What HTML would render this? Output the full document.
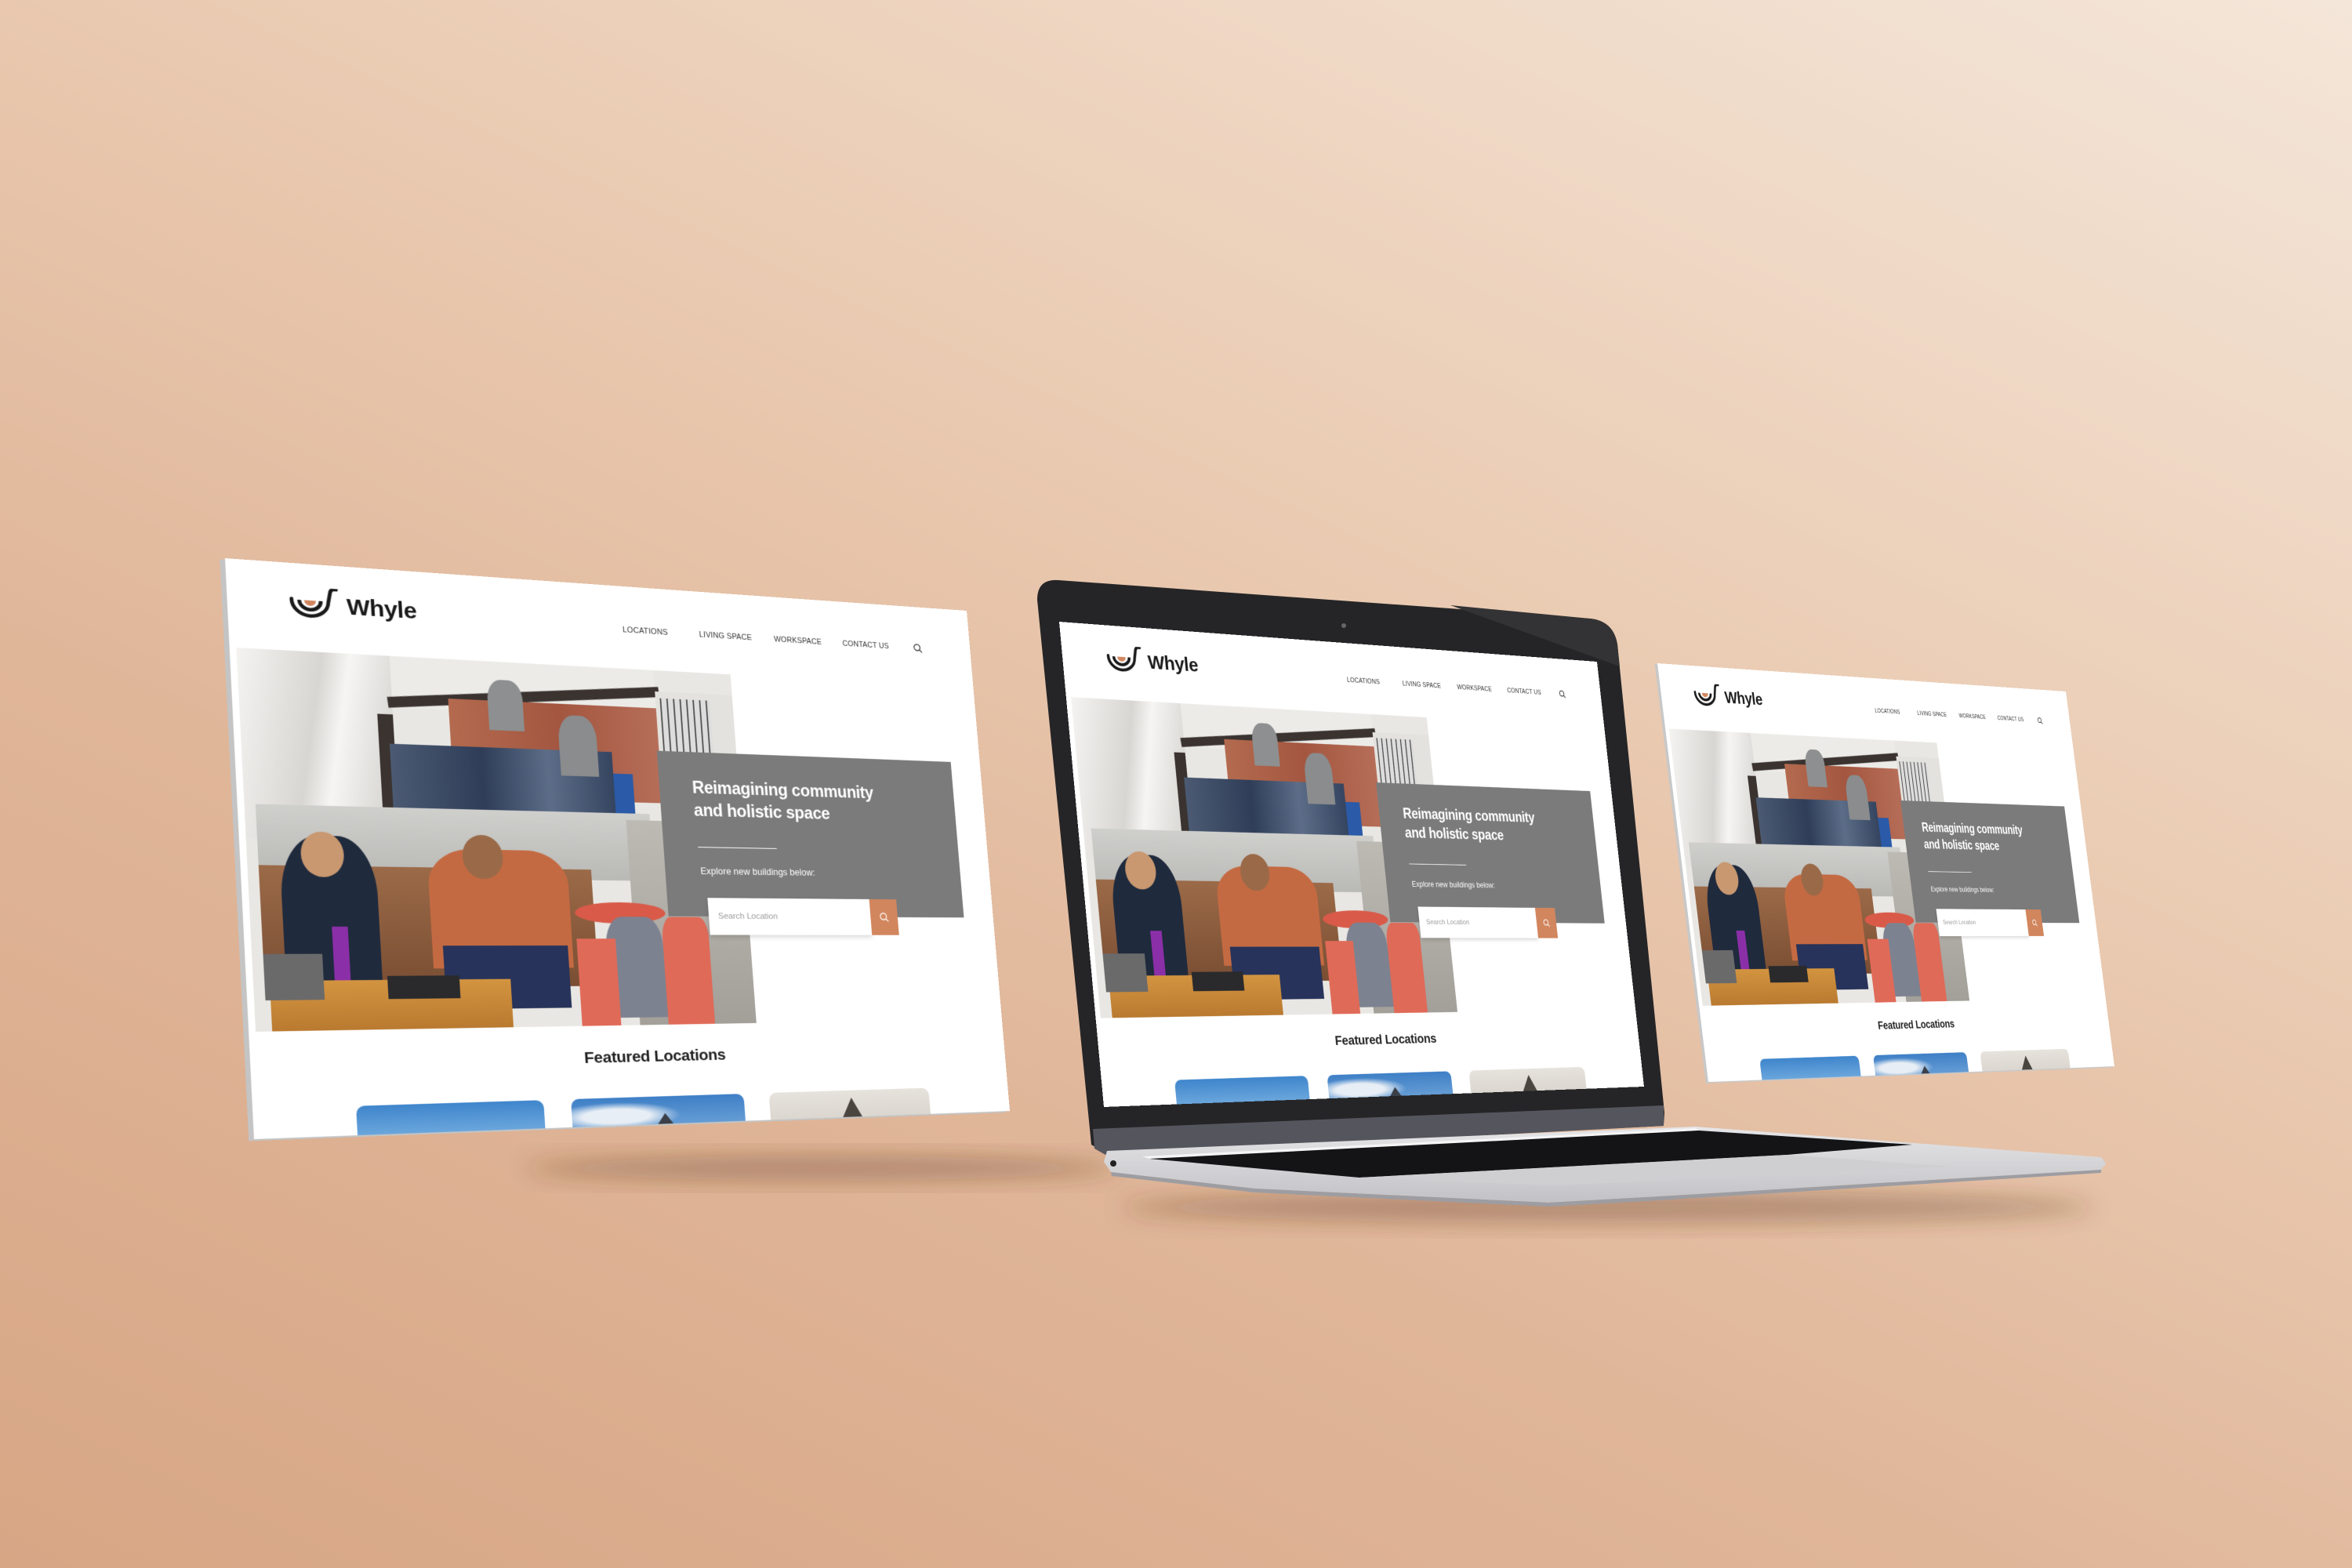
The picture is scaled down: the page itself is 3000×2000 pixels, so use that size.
<!DOCTYPE html>
<html><head><meta charset="utf-8"><style>
html,body{margin:0;padding:0}
body{width:3000px;height:2000px;overflow:hidden;position:relative;
background:linear-gradient(205deg,#f4e6d9 0%,#ebcdb5 35%,#e0b699 65%,#d7a685 100%);
font-family:"Liberation Sans",sans-serif}
.pg{position:absolute;width:1000px;height:720px;transform-origin:0 0;background:#fff;overflow:hidden}
.nav{position:absolute;top:54px;font-size:10.5px;color:#333;letter-spacing:.2px}
.ph{position:absolute;left:8px;top:113px;width:632px;height:477px;overflow:hidden;background:#e9e7e3}
.ph div{position:absolute}
.gb{position:absolute;left:530px;top:223px;width:425px;height:223px;background:#7b7b7b}
.h1{position:absolute;left:575px;top:256px;color:#fff;font-weight:bold;font-size:23px;line-height:31px;letter-spacing:-.4px}
.card{position:absolute;top:684px;width:230px;height:60px;border-radius:10px 10px 0 0;overflow:hidden}
</style></head><body>

<svg style="position:absolute;left:0;top:0" width="3000" height="2000">
<defs>
<filter id="bl" x="-50%" y="-50%" width="200%" height="200%"><feGaussianBlur stdDeviation="14"/></filter>
<linearGradient id="base" x1="0" y1="0" x2="0" y2="1"><stop offset="0" stop-color="#e6e6e8"/><stop offset="1" stop-color="#c2c2c6"/></linearGradient>
</defs>
<ellipse cx="1050" cy="1490" rx="380" ry="16" fill="rgba(90,50,25,.35)" filter="url(#bl)"/>
<ellipse cx="2050" cy="1540" rx="620" ry="20" fill="rgba(90,50,25,.35)" filter="url(#bl)"/>
<!-- laptop bezel -->
<path d="M1323,765 Q1323,738 1350,740 L2028,789 Q2058,792 2063,822 L2123,1419 L2122,1436 L1412,1472 L1392,1460 Z" fill="#252527"/>
<path d="M1850,772 L2028,789 Q2058,792 2063,822 L2066,850 Z" fill="#333335"/>
<circle cx="1714" cy="798" r="3" fill="#666"/>
<polygon points="1394,1440 2122,1410 2122,1436 1412,1474 1396,1465" fill="#55555d"/>
<!-- base -->
<polygon points="1412,1468 2162,1437 2680,1476 2686,1484 2680,1492 2100,1527 1975,1534 1600,1516 1417,1495 1408,1482" fill="url(#base)"/>
<polygon points="1417,1495 1600,1516 1975,1534 2100,1527 2680,1492 2680,1496 2100,1532 1975,1539 1600,1521 1418,1500" fill="#9d9da2"/>
<polygon points="1457,1475 2162,1439 2167,1442 1466,1478" fill="#f4f4f5"/>
<polygon points="1466,1478 2167,1442 2439,1460 2279,1473 1734,1502" fill="#141416"/>
<polygon points="1734,1502 2279,1473 2490,1488 2250,1500 1980,1512" fill="#cfcfd2"/>
<circle cx="1420" cy="1484" r="4" fill="#222"/>
</svg>

<!-- LEFT SCREEN -->
<div class="pg" id="p1" style="left:287px;top:712px;transform:matrix3d(1.09724,0.07771,0,0.00015987,0.04996,1.00056,0,-0.0000386,0,0,1,0,0,0,0,1);box-shadow:-6px 2px 0 #c4c4c4"></div>
<!-- LAPTOP SCREEN -->
<div class="pg" id="p2" style="left:1351px;top:793px;transform:matrix3d(0.78291,0.05820,0,0.00014127,0.07785,0.84540,0,-0.00002313,0,0,1,0,0,0,0,1)"></div>
<!-- RIGHT SCREEN -->
<div class="pg" id="p3" style="left:2114px;top:846px;transform:matrix3d(0.58186,0.04021,0,0.00011681,0.08954,0.73560,0,-0.00001138,0,0,1,0,0,0,0,1);box-shadow:-6px 2px 0 #c8c8c8"></div>

<template id="tp">
<svg style="position:absolute;left:72px;top:30px" width="62" height="48" viewBox="0 0 62 48">
<path d="M4,16 A22,20 0 0 0 48,18 L51,4 Q53,0 58,1" fill="none" stroke="#1a1a1a" stroke-width="4.5" stroke-linecap="round"/>
<path d="M13,17 A13,12 0 0 0 39,17" fill="none" stroke="#1a1a1a" stroke-width="4.5"/>
<path d="M19,17 A7,7 0 0 0 33,17 Z" fill="#d2865e"/>
</svg>
<div style="position:absolute;left:142px;top:36px;font-size:30px;font-weight:bold;color:#1a1a1a;letter-spacing:-.5px">Whyle</div>
<div class="nav" style="left:495px">LOCATIONS</div>
<div class="nav" style="left:600px">LIVING SPACE</div>
<div class="nav" style="left:706px">WORKSPACE</div>
<div class="nav" style="left:806px">CONTACT US</div>
<svg style="position:absolute;left:912px;top:53px" width="14" height="14" viewBox="0 0 14 14"><circle cx="6" cy="6" r="4.5" fill="none" stroke="#333" stroke-width="1.4"/><path d="M9.3,9.3 L13,13" stroke="#333" stroke-width="1.4"/></svg>
<div class="ph">
 <div style="left:0;top:0;width:29%;height:50%;background:linear-gradient(100deg,#f4f3f1,#d8d6d2 45%,#f6f5f3 60%,#cfcdc9)"></div>
 <div style="left:29%;top:0;width:54%;height:14%;background:#ecebe8"></div>
 <div style="left:28%;top:8%;width:56%;height:3%;background:#3a3330;transform:rotate(-5deg)"></div>
 <div style="left:40%;top:11%;width:45%;height:27%;background:linear-gradient(90deg,#b36a4e,#a35640 50%,#b8705a)"></div>
 <div style="left:83%;top:6%;width:17%;height:24%;background:#e4e2de"></div>
 <div style="left:84%;top:8%;width:11%;height:17%;background:repeating-linear-gradient(90deg,#555 0 2px,#ddd 2px 9px)"></div>
 <div style="left:26%;top:16%;width:3%;height:50%;background:#3a3330"></div>
 <div style="left:28%;top:24%;width:45%;height:19%;background:linear-gradient(90deg,#4b5a72,#2f3d58 40%,#5c6d88 70%,#354560)"></div>
 <div style="left:48%;top:5%;width:7%;height:14%;background:#8d8f90;border-radius:40% 40% 0 0"></div>
 <div style="left:62%;top:14%;width:8%;height:17%;background:#8a8c8d;border-radius:40% 40% 0 0"></div>
 <div style="left:73%;top:30%;width:4%;height:15%;background:#2a5aa8"></div>
 <div style="left:2%;top:41%;width:78%;height:19%;background:linear-gradient(180deg,#cfcfcc,#b9b9b6)"></div>
 <div style="left:75%;top:43%;width:25%;height:57%;background:linear-gradient(180deg,#bdbab4,#a39f99)"></div>
 <div style="left:2%;top:57%;width:65%;height:32%;background:linear-gradient(180deg,#9b6a48,#7a4e33)"></div>
 <div style="left:6%;top:49%;width:18%;height:40%;background:#1f2a3d;border-radius:40% 40% 0 0"></div>
 <div style="left:10%;top:48%;width:8%;height:12%;background:#c99870;border-radius:50%"></div>
 <div style="left:34%;top:52%;width:28%;height:32%;background:#c46a42;border-radius:30% 30% 0 0"></div>
 <div style="left:41%;top:48%;width:8%;height:12%;background:#9a6a48;border-radius:50%"></div>
 <div style="left:36%;top:78%;width:25%;height:17%;background:#27335a"></div>
 <div style="left:15%;top:73%;width:3%;height:15%;background:#8b2fa8"></div>
 <div style="left:3%;top:87%;width:46%;height:13%;background:linear-gradient(180deg,#d39440,#b97a30)"></div>
 <div style="left:2%;top:80%;width:11%;height:12%;background:#6a6a6a"></div>
 <div style="left:25%;top:86%;width:14%;height:6%;background:#2a2a2c"></div>
 <div style="left:63%;top:66%;width:19%;height:6%;background:#d95a48;border-radius:50%"></div>
 <div style="left:69%;top:70%;width:12%;height:28%;background:#7d8290;border-radius:30% 30% 0 0"></div>
 <div style="left:63%;top:76%;width:8%;height:24%;background:#e06a58"></div>
 <div style="left:81%;top:70%;width:10%;height:30%;background:#df6a58;border-radius:20% 20% 0 0"></div>
</div>
<div class="gb"></div>
<div class="h1">Reimagining community<br>and holistic space</div>
<div style="position:absolute;left:577px;top:352px;width:110px;height:1px;background:#fff"></div>
<div style="position:absolute;left:578px;top:378px;font-size:12.5px;color:#fff">Explore new buildings below:</div>
<div style="position:absolute;left:585px;top:421px;width:230px;height:50px;background:#fff;box-shadow:0 3px 6px rgba(0,0,0,.15)"></div>
<div style="position:absolute;left:598px;top:440px;font-size:11.5px;color:#9a9a9a">Search Location</div>
<div style="position:absolute;left:815px;top:421px;width:40px;height:50px;background:#d2865e"></div>
<svg style="position:absolute;left:828px;top:439px" width="14" height="14" viewBox="0 0 14 14"><circle cx="6" cy="6" r="4.5" fill="none" stroke="#fff" stroke-width="1.3"/><path d="M9.3,9.3 L13,13" stroke="#fff" stroke-width="1.3"/></svg>
<div style="position:absolute;left:0;width:1000px;top:620px;text-align:center;font-size:21px;font-weight:bold;color:#222;letter-spacing:-.3px">Featured Locations</div>
<div class="card" style="left:120px;background:linear-gradient(180deg,#3f85cc,#6aa6dc 60%,#a9cbe8)"></div>
<div class="card" style="left:385px;background:radial-gradient(ellipse at 25% 40%,#e8eef5 0 18%,transparent 35%),linear-gradient(180deg,#3e7fc6,#7fb0de)"><div style="position:absolute;left:100px;top:22px;width:0;height:0;border-left:22px solid transparent;border-right:22px solid transparent;border-bottom:30px solid #3a3f48"></div></div>
<div class="card" style="left:650px;background:linear-gradient(180deg,#e6e2dc,#d4cfc7)"><div style="position:absolute;left:92px;top:10px;width:0;height:0;border-left:24px solid transparent;border-right:24px solid transparent;border-bottom:45px solid #4b4540"></div></div>
</template>
<script>
var t=document.getElementById('tp').innerHTML;
['p1','p2','p3'].forEach(function(i){document.getElementById(i).innerHTML=t;});
</script>
</body></html>
